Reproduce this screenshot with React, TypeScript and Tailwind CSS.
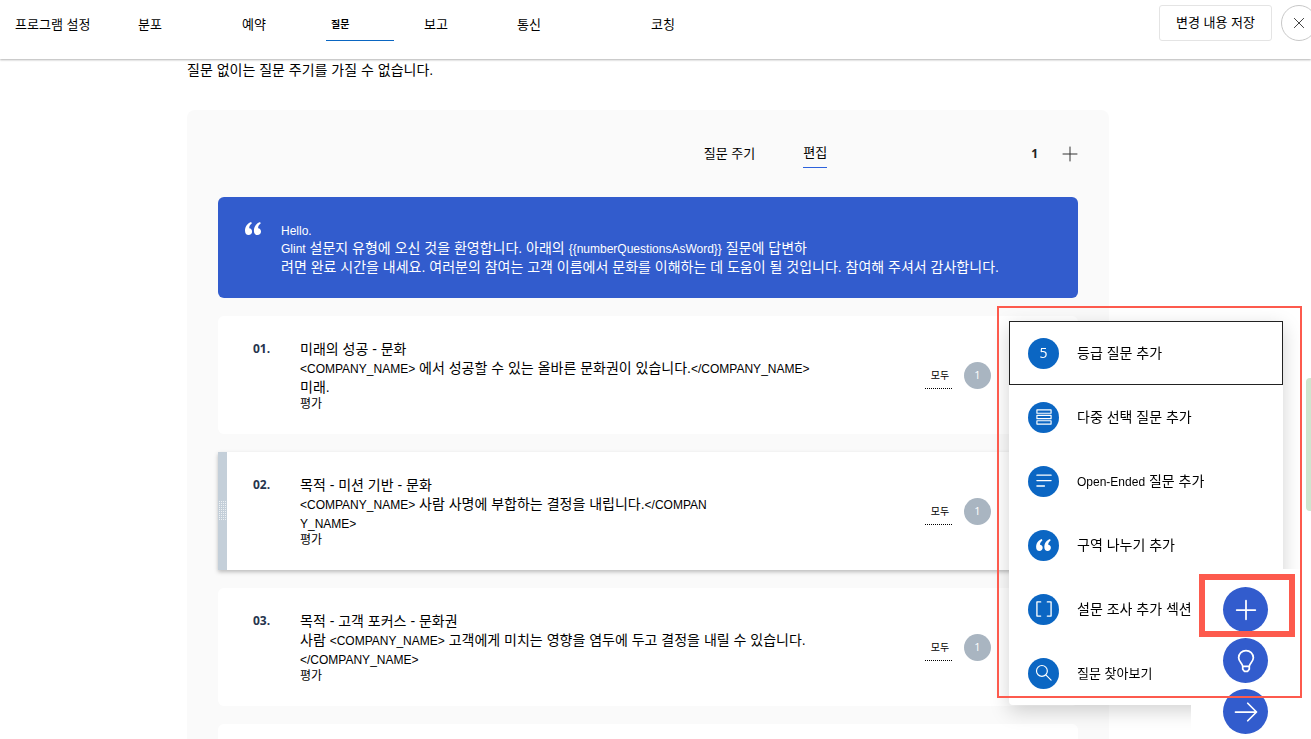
import React from "react";
import clsx from "clsx";

const tabs = [
  { label: "프로그램 설정", space: "w-[123px]" },
  { label: "분포", space: "w-[104px]" },
  { label: "예약", space: "w-[84px]" },
  { label: "질문", space: "w-[98px]", active: true },
  { label: "보고", space: "w-[93px]" },
  { label: "통신", space: "w-[134px]" },
  { label: "코칭", space: "w-[60px]" },
];

const Latin: React.FC<{ children: React.ReactNode }> = ({ children }) => (
  <span className="text-xs leading-none">{children}</span>
);

const questions = [
  {
    number: "01.",
    title: "미래의 성공 - 문화",
    lines: [
      <>
        <Latin>{"<COMPANY_NAME>"}</Latin> 에서 성공할 수 있는 올바른 문화권이
        있습니다.<Latin>{"</COMPANY_NAME>"}</Latin>
      </>,
      <>미래.</>,
    ],
  },
  {
    number: "02.",
    title: "목적 - 미션 기반 - 문화",
    selected: true,
    lines: [
      <>
        <Latin>{"<COMPANY_NAME>"}</Latin> 사람 사명에 부합하는 결정을
        내립니다.<Latin>{"</COMPAN"}</Latin>
      </>,
      <Latin>Y_NAME&gt;</Latin>,
    ],
  },
  {
    number: "03.",
    title: "목적 - 고객 포커스 - 문화권",
    lines: [
      <>
        사람 <Latin>{"<COMPANY_NAME>"}</Latin> 고객에게 미치는 영향을 염두에
        두고 결정을 내릴 수 있습니다.
      </>,
      <Latin>{"</COMPANY_NAME>"}</Latin>,
    ],
  },
];

const QuoteIcon: React.FC<{ className?: string }> = ({ className }) => (
  <svg viewBox="0 0 16 13" className={className} fill="currentColor">
    <path d="M6.2 0C2.5 1.2 0 4.6 0 8.7C0 11.400 1.400 13 3.600 13C5.600 13 7.100 11.600 7.100 9.600C7.100 7.700 5.900 6.400 4.200 6.300C4.200 4.300 5 2.800 6.800 1.600Z" />
    <path d="M15.100 0C11.400 1.200 8.900 4.600 8.900 8.700C8.900 11.400 10.300 13 12.500 13C14.500 13 16 11.600 16 9.600C16 7.700 14.800 6.400 13.100 6.300C13.100 4.300 13.900 2.800 15.700 1.600Z" />
  </svg>
);

const LineIcon: React.FC<{ d: string; className: string }> = ({
  d,
  className,
}) => (
  <svg
    viewBox="0 0 24 24"
    className={className}
    fill="none"
    stroke="currentColor"
    strokeLinecap="round"
    strokeLinejoin="round"
  >
    <path d={d} />
  </svg>
);

const menuItems = [
  {
    icon: <span className="font-['Open_Sans'] text-sm">5</span>,
    label: "등급 질문 추가",
  },
  {
    icon: (
      <LineIcon
        className="size-5 stroke-[1.4]"
        d="M3.500 3.500h17v4h-17zM3.500 10h17v4h-17zM3.500 16.500h17v4h-17z"
      />
    ),
    label: "다중 선택 질문 추가",
  },
  {
    icon: (
      <LineIcon className="size-5 stroke-[1.6]" d="M3.500 5h17M3.500 11.500h17M3.500 18h9" />
    ),
    label: (
      <>
        <Latin>Open-Ended</Latin> 질문 추가
      </>
    ),
  },
  { icon: <QuoteIcon className="h-3 w-[15px]" />, label: "구역 나누기 추가" },
  {
    icon: (
      <LineIcon
        className="size-5 stroke-[1.6]"
        d="M8 3.500H3.500v17H8M16 3.500h4.500v17H16"
      />
    ),
    label: "설문 조사 추가 섹션",
  },
  {
    icon: (
      <LineIcon
        className="size-5 stroke-[1.4]"
        d="M16 9.500a6.500 6.500 0 1 1-13 0 6.500 6.500 0 0 1 13 0zM14.200 14.200l6.300 6.300"
      />
    ),
    label: <span className="text-[13px]">질문 찾아보기</span>,
  },
];

const actions = [
  { name: "추가", d: "M12 4v16M4 12h16" },
  {
    name: "도움말",
    d: "M9.200 16.500C8.800 14 5.700 12.500 5.700 9.300a6.300 6.300 0 0 1 12.600 0c0 3.200-3.100 4.700-3.500 7.200zM9.200 16.500v2.500l1.400 1.800h2.800l1.400-1.800v-2.500",
  },
  { name: "다음", d: "M3 12h17.500M13.500 4.500l7.500 7.500-7.500 7.500" },
];

const Header = () => (
  <header className="relative z-10 flex h-[59px] shrink-0 justify-between bg-white pl-[15px] shadow-[0_1px_2px_rgba(0,0,0,0.3)]">
    <nav className="flex pt-2 text-[13px]">
      {tabs.map((tab) => (
        <div key={tab.label} className={clsx("shrink-0", tab.space)}>
          <a
            href="#"
            className={clsx(
              "flex h-[33px] items-center whitespace-nowrap",
              tab.active &&
                "w-[68px] border-b border-[#0a66c2] pl-[5px] text-[10px] font-bold",
            )}
          >
            {tab.label}
          </a>
        </div>
      ))}
    </nav>
    <div className="-mr-[6px] flex gap-[9px] pt-[5px]">
      <button className="h-9 w-[113px] rounded-[3px] border border-[#e4e4e4] text-[13px] whitespace-nowrap">
        변경 내용 저장
      </button>
      <button
        aria-label="닫기"
        className="flex size-9 shrink-0 items-center justify-center rounded-full border border-[#c8c8c8] text-[#444444]"
      >
        <LineIcon className="size-4 stroke-[1.5]" d="M5 5l14 14M19 5L5 19" />
      </button>
    </div>
  </header>
);

const Banner = () => (
  <section className="flex h-[101px] rounded-md bg-[#325ccd] pt-[25px] pl-[27px] text-sm text-white">
    <QuoteIcon className="h-[13px] w-4 shrink-0" />
    <div className="ml-5 leading-[19px]">
      <p className="leading-[17px]">
        <Latin>Hello.</Latin>
      </p>
      <p>
        <Latin>Glint</Latin> 설문지 유형에 오신 것을 환영합니다. 아래의{" "}
        <Latin>{"{{numberQuestionsAsWord}}"}</Latin> 질문에 답변하
      </p>
      <p>
        려면 완료 시간을 내세요. 여러분의 참여는 고객 이름에서 문화를 이해하는
        데 도움이 될 것입니다. 참여해 주셔서 감사합니다.
      </p>
    </div>
  </section>
);

const DragHandle = () => (
  <div className="flex w-[9px] items-center justify-center bg-[#c4cfd9]">
    <svg viewBox="0 0 7 20" className="h-5 w-[7px]" fill="#ffffff">
      {[0, 2, 4, 6, 8, 10, 12, 14, 16, 18].map((y) =>
        [0, 2, 4, 6].map((x) => (
          <rect key={`${x}-${y}`} x={x} y={y} width="1" height="1" opacity=".7" />
        )),
      )}
    </svg>
  </div>
);

const QuestionCard: React.FC<{ question: (typeof questions)[number] }> = ({
  question,
}) => (
  <li
    className={clsx(
      "flex h-[118px] shrink-0 bg-white",
      question.selected
        ? "shadow-[0_2px_4px_rgba(0,0,0,0.25)]"
        : "rounded-md pl-[9px]",
    )}
  >
    {question.selected && <DragHandle />}
    <span className="w-[47px] shrink-0 pt-[23px] pl-[26px] font-['Open_Sans'] text-xs leading-5 font-bold text-[#26344d]">
      {question.number}
    </span>
    <div className="flex-1 pt-[23px] pl-[26px] text-sm leading-[19px]">
      <h3 className="leading-5">{question.title}</h3>
      {question.lines.map((line, i) => (
        <p key={i}>{line}</p>
      ))}
      <p className="text-xs leading-[14px]">평가</p>
    </div>
    <div className="mr-[87px] flex items-center gap-3">
      <button className="mt-[2px] h-[26px] w-[27px] border-b border-dotted border-black pl-[3px] text-[10px]">
        모두
      </button>
      <span className="flex size-[27px] items-center justify-center rounded-full bg-[#a9b5c1] font-['Open_Sans'] text-[11px] text-white">
        1
      </span>
    </div>
  </li>
);

const AddMenu = () => (
  <div className="fixed right-7 bottom-[34px] z-20 w-[274px] rounded bg-white shadow-[0_6px_20px_rgba(0,0,0,0.18)]">
    {menuItems.map((item, i) => (
      <button
        key={i}
        className={clsx(
          "flex h-16 w-full items-center gap-[18px] border px-[18px] text-left text-sm",
          i === 0 ? "border-[#222222]" : "border-transparent",
        )}
      >
        <span className="flex size-[31px] shrink-0 items-center justify-center rounded-full bg-[#0b66c3] text-white">
          {item.icon}
        </span>
        <span className="whitespace-nowrap">{item.label}</span>
      </button>
    ))}
  </div>
);

const FloatingActions = () => (
  <div className="fixed right-0 bottom-0 z-30 flex h-[170px] w-[120px] flex-col items-center justify-end gap-[6px] bg-white pr-[11px] pb-[5px]">
    {actions.map((action) => (
      <button
        key={action.name}
        aria-label={action.name}
        className="flex size-[45px] shrink-0 items-center justify-center rounded-full bg-[#325ccd] text-white"
      >
        <LineIcon className="size-7 stroke-[1.5]" d={action.d} />
      </button>
    ))}
  </div>
);

const App: React.FC = () => {
  return (
    <div className="flex h-screen flex-col overflow-hidden bg-white font-['Liberation_Sans','Noto_Sans_CJK_KR',sans-serif] text-black">
      <Header />
      <main className="min-h-0 flex-1 pr-[15px]">
        <div className="mx-auto max-w-[922px]">
          <p className="h-[51px] text-sm leading-[22px]">
            질문 없이는 질문 주기를 가질 수 없습니다.
          </p>
          <div className="rounded-lg bg-[#fafafa] px-[31px]">
            <div className="flex h-[87px] items-center justify-end text-[13px]">
              <a href="#" className="mr-12">
                질문 주기
              </a>
              <a
                href="#"
                className="mr-[204px] flex h-7 items-center border-b border-b-[#2d62dc]"
              >
                편집
              </a>
              <span className="mr-6 font-['Open_Sans'] text-xs font-bold text-[#222222]">
                1
              </span>
              <button aria-label="주기 추가">
                <LineIcon
                  className="size-4 stroke-[1.5] text-[#333333]"
                  d="M12 1.500v21M1.500 12h21"
                />
              </button>
            </div>
            <Banner />
            <ul className="mt-[18px] flex flex-col gap-[18px]">
              {questions.map((question) => (
                <QuestionCard key={question.number} question={question} />
              ))}
              <li className="h-[118px] rounded-md bg-white" />
            </ul>
          </div>
        </div>
      </main>
      <AddMenu />
      <FloatingActions />
      <div className="fixed top-[378px] right-0 h-[133px] w-[5px] rounded-l bg-[#cfe6cf]" />
      {/* callout frames */}
      <div className="pointer-events-none fixed right-[9px] bottom-[41px] z-40 h-[392px] w-[305px] border-2 border-[#fd5a4d]" />
      <div className="pointer-events-none fixed right-4 bottom-[102px] z-40 h-[63px] w-24 border-[6px] border-[#fd5a4d]" />
    </div>
  );
};

export default App;
